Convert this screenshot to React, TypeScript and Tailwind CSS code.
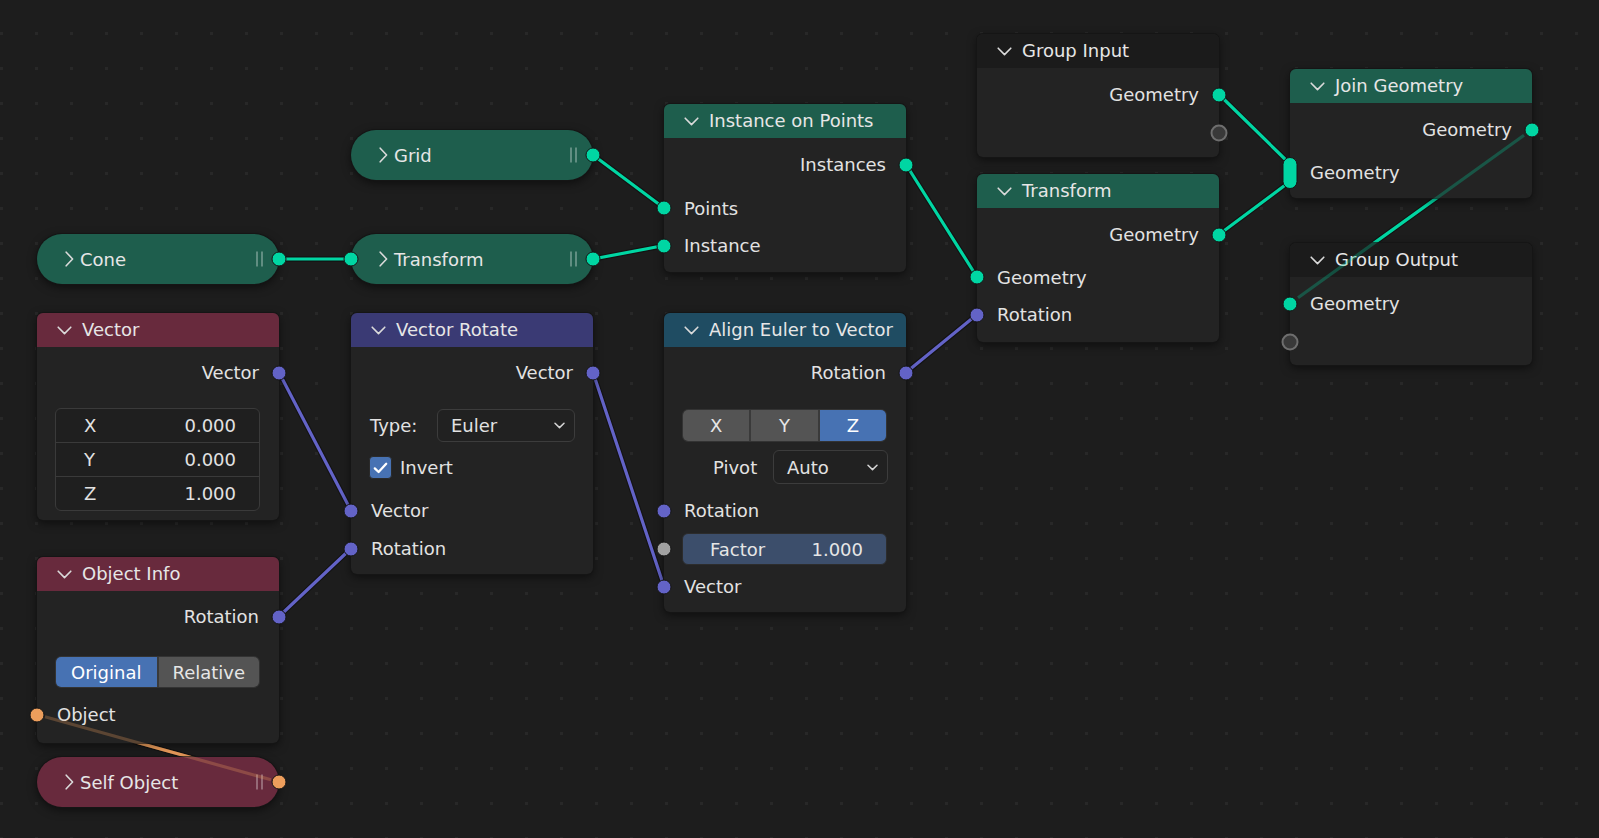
import React from 'react';

type SockKind = 'dot' | 'hollow' | 'multi';

function Socket({ side, color = '', kind = 'dot' }: { side: 'l' | 'r'; color?: string; kind?: SockKind }) {
  const pos = side === 'l' ? 'left-0 -translate-x-1/2' : 'right-0 translate-x-1/2';
  if (kind === 'hollow') {
    return (
      <div
        className={`absolute top-1/2 -translate-y-1/2 ${pos} w-[17px] h-[17px] rounded-full border-2 border-[#6e6e6e] bg-[#393939]`}
      />
    );
  }
  if (kind === 'multi') {
    return (
      <div
        className={`absolute top-1/2 -translate-y-1/2 ${pos} w-[15px] h-[32px] rounded-full border border-[#151515] ${color}`}
      />
    );
  }
  return (
    <div
      className={`absolute top-1/2 -translate-y-1/2 ${pos} w-[15px] h-[15px] rounded-full border border-[#151515] ${color}`}
    />
  );
}

function ChevronDown() {
  return (
    <svg width="15" height="9" viewBox="0 0 15 9" className="shrink-0">
      <path d="M1.2 1.2L7.5 7.6L13.8 1.2" fill="none" stroke="#dadada" strokeWidth="1.6" strokeLinecap="round" strokeLinejoin="round" />
    </svg>
  );
}

function ChevronRight() {
  return (
    <svg width="9" height="16" viewBox="0 0 9 16" className="shrink-0">
      <path d="M1.2 1.2L7.6 8L1.2 14.8" fill="none" stroke="#dadada" strokeWidth="1.6" strokeLinecap="round" strokeLinejoin="round" />
    </svg>
  );
}

function SmallChevron() {
  return (
    <svg width="11" height="7" viewBox="0 0 11 7" className="shrink-0">
      <path d="M1 1.2L5.5 5.6L10 1.2" fill="none" stroke="#d5d5d5" strokeWidth="1.5" strokeLinecap="round" strokeLinejoin="round" />
    </svg>
  );
}

function Pause() {
  return (
    <div className="flex gap-[3px]">
      <div className="w-[2px] h-[15px] bg-white/30" />
      <div className="w-[2px] h-[15px] bg-white/30" />
    </div>
  );
}

function Node({ pos, header, title, children }: { pos: string; header: string; title: string; children: React.ReactNode }) {
  return (
    <div className={`absolute ${pos} w-[242px] rounded-[6px] bg-[#232323] shadow-[0_0_0_1px_#151515,0_3px_10px_rgba(0,0,0,0.55)]`}>
      <div className={`h-[34px] rounded-t-[6px] ${header} flex items-center pl-[20px] gap-[10px] text-[18px] text-[#e6e6e6]`}>
        <ChevronDown />
        <span className="leading-none">{title}</span>
      </div>
      {children}
    </div>
  );
}

function Sp({ h }: { h: string }) {
  return <div className={h} />;
}

function OutRow({ h, label, color, kind }: { h: string; label: string; color?: string; kind?: SockKind }) {
  return (
    <div className={`relative flex items-center justify-end pr-[20px] ${h} text-[18px] text-[#e2e2e2]`}>
      <span>{label}</span>
      <Socket side="r" color={color} kind={kind} />
    </div>
  );
}

function InRow({ h, label, color, kind }: { h: string; label: string; color?: string; kind?: SockKind }) {
  return (
    <div className={`relative flex items-center pl-[20px] ${h} text-[18px] text-[#e2e2e2]`}>
      <span>{label}</span>
      <Socket side="l" color={color} kind={kind} />
    </div>
  );
}

function Pill({
  pos,
  color,
  title,
  inColor,
  outColor,
}: {
  pos: string;
  color: string;
  title: string;
  inColor?: string;
  outColor: string;
}) {
  return (
    <div
      className={`absolute ${pos} w-[242px] h-[50px] rounded-full ${color} flex items-center pl-[28px] text-[18px] text-[#e6e6e6] shadow-[0_0_0_1px_#151515,0_3px_10px_rgba(0,0,0,0.55)]`}
    >
      <ChevronRight />
      <span className="ml-[6px]">{title}</span>
      <div className="absolute right-[16px] top-1/2 -translate-y-1/2">
        <Pause />
      </div>
      {inColor ? <Socket side="l" color={inColor} /> : null}
      <Socket side="r" color={outColor} />
    </div>
  );
}

function Dropdown({ label, cls }: { label: string; cls: string }) {
  return (
    <div className={`${cls} h-full rounded-[6px] border border-[#3c3c3c] bg-[#212121] flex items-center justify-between pl-[13px] pr-[9px] text-[18px] text-[#e2e2e2]`}>
      <span>{label}</span>
      <SmallChevron />
    </div>
  );
}

const G = 'bg-[#00d6a3]';
const V = 'bg-[#6363c7]';
const O = 'bg-[#ed9e5c]';
const F = 'bg-[#a1a1a1]';

type L = [number, number, number, number, string];

const links: L[] = [
  [279, 259, 351, 259, '#00d6a3'],
  [593, 155, 664, 208, '#00d6a3'],
  [593, 259, 664, 245.5, '#00d6a3'],
  [906, 164.5, 977, 277, '#00d6a3'],
  [906, 372.5, 977, 314.5, '#6363c7'],
  [1219, 94.5, 1288, 162, '#00d6a3'],
  [1219, 234.5, 1288, 183, '#00d6a3'],
  [1532, 129.5, 1290, 303.5, '#00d6a3'],
  [279, 372.5, 351, 510.5, '#6363c7'],
  [279, 616.5, 351, 548.5, '#6363c7'],
  [593, 372.5, 664, 586.5, '#6363c7'],
  [279, 782, 37, 714.5, '#ed9e5c'],
];

const backLinks: L[] = [links[7], links[11]];

export default function App() {
  return (
    <div className="relative w-[1599px] h-[838px] overflow-hidden bg-[#1d1d1d] font-['DejaVu_Sans',sans-serif]">
      <svg className="absolute inset-0" width="1599" height="838">
        <defs>
          <pattern id="dots" width="35" height="35" patternUnits="userSpaceOnUse">
            <rect x="0" y="32" width="3" height="3" fill="#282828" />
          </pattern>
        </defs>
        <rect width="1599" height="838" fill="url(#dots)" />
        {links.map(([x1, y1, x2, y2, c], i) => (
          <g key={i}>
            <line x1={x1} y1={y1} x2={x2} y2={y2} stroke="#000" strokeOpacity="0.35" strokeWidth="5.5" strokeLinecap="round" />
            <line x1={x1} y1={y1} x2={x2} y2={y2} stroke={c} strokeWidth="3.2" strokeLinecap="round" />
          </g>
        ))}
      </svg>

      {/* Column 1 */}
      <Pill pos="left-[37px] top-[234px]" color="bg-[#1e5e4d]" title="Cone" outColor={G} />

      <Node pos="left-[37px] top-[313px]" header="bg-[#682a3d]" title="Vector">
        <Sp h="h-[6px]" />
        <OutRow h="h-[39px]" label="Vector" color={V} />
        <Sp h="h-[16px]" />
        <div className="ml-[18px] mr-[19px] h-[103px] rounded-[6px] border border-[#3a3a3a] bg-[#1f1f1f] flex flex-col text-[18px] text-[#e2e2e2]">
          {[
            ['X', '0.000'],
            ['Y', '0.000'],
            ['Z', '1.000'],
          ].map(([k, v], i) => (
            <div
              key={k}
              className={`flex-1 flex items-center justify-between pl-[28px] pr-[23px] ${i > 0 ? 'border-t border-[#3a3a3a]' : ''}`}
            >
              <span>{k}</span>
              <span>{v}</span>
            </div>
          ))}
        </div>
        <Sp h="h-[9px]" />
      </Node>

      <Node pos="left-[37px] top-[557px]" header="bg-[#682a3d]" title="Object Info">
        <Sp h="h-[6px]" />
        <OutRow h="h-[39px]" label="Rotation" color={V} />
        <Sp h="h-[20px]" />
        <div className="ml-[18px] mr-[19px] h-[32px] rounded-[6px] border border-[#333] flex overflow-hidden text-[18px] text-white">
          <div className="flex-1 bg-[#4772b3] flex items-center justify-center">Original</div>
          <div className="w-[2px] bg-[#3a3a3a]" />
          <div className="flex-1 bg-[#545454] flex items-center justify-center text-[#e6e6e6]">Relative</div>
        </div>
        <Sp h="h-[7px]" />
        <InRow h="h-[39px]" label="Object" color={O} />
        <Sp h="h-[9px]" />
      </Node>

      <Pill pos="left-[37px] top-[757px]" color="bg-[#682a3d]" title="Self Object" outColor={O} />

      {/* Column 2 */}
      <Pill pos="left-[351px] top-[130px]" color="bg-[#1e5e4d]" title="Grid" outColor={G} />
      <Pill pos="left-[351px] top-[234px]" color="bg-[#1e5e4d]" title="Transform" inColor={G} outColor={G} />

      <Node pos="left-[351px] top-[313px]" header="bg-[#3a3a74]" title="Vector Rotate">
        <Sp h="h-[6px]" />
        <OutRow h="h-[39px]" label="Vector" color={V} />
        <Sp h="h-[17px]" />
        <div className="h-[33px] flex items-center pl-[19px] pr-[18px] text-[18px] text-[#e2e2e2]">
          <span className="w-[67px]">Type:</span>
          <Dropdown label="Euler" cls="flex-1" />
        </div>
        <Sp h="h-[7px]" />
        <div className="h-[37px] flex items-center pl-[18px] text-[18px] text-[#e2e2e2]">
          <div className="w-[23px] h-[23px] rounded-[4px] bg-[#4772b3] border border-[#2a2a2a] flex items-center justify-center">
            <svg width="15" height="12" viewBox="0 0 15 12">
              <path d="M1.8 6.4L5.6 10L13.2 1.8" fill="none" stroke="#fff" strokeWidth="2.3" strokeLinecap="round" strokeLinejoin="round" />
            </svg>
          </div>
          <span className="ml-[8px]">Invert</span>
        </div>
        <Sp h="h-[5px]" />
        <InRow h="h-[39px]" label="Vector" color={V} />
        <InRow h="h-[37px]" label="Rotation" color={V} />
        <Sp h="h-[7px]" />
      </Node>

      {/* Column 3 */}
      <Node pos="left-[664px] top-[104px]" header="bg-[#1e5e4d]" title="Instance on Points">
        <Sp h="h-[7px]" />
        <OutRow h="h-[39px]" label="Instances" color={G} />
        <Sp h="h-[5px]" />
        <InRow h="h-[38px]" label="Points" color={G} />
        <InRow h="h-[37px]" label="Instance" color={G} />
        <Sp h="h-[8px]" />
      </Node>

      <Node pos="left-[664px] top-[313px]" header="bg-[#1f4c62]" title="Align Euler to Vector">
        <Sp h="h-[6px]" />
        <OutRow h="h-[39px]" label="Rotation" color={V} />
        <Sp h="h-[17px]" />
        <div className="ml-[18px] mr-[19px] h-[33px] rounded-[6px] border border-[#333] flex overflow-hidden text-[18px] text-white">
          <div className="flex-1 bg-[#545454] flex items-center justify-center text-[#e6e6e6]">X</div>
          <div className="w-[2px] bg-[#3a3a3a]" />
          <div className="flex-1 bg-[#545454] flex items-center justify-center text-[#e6e6e6]">Y</div>
          <div className="w-[2px] bg-[#3a3a3a]" />
          <div className="flex-1 bg-[#4772b3] flex items-center justify-center">Z</div>
        </div>
        <Sp h="h-[8px]" />
        <div className="h-[34px] flex items-center pl-[49px] pr-[18px] text-[18px] text-[#e2e2e2]">
          <span className="w-[60px]">Pivot</span>
          <Dropdown label="Auto" cls="flex-1" />
        </div>
        <Sp h="h-[7px]" />
        <InRow h="h-[39px]" label="Rotation" color={V} />
        <div className="relative h-[38px] flex items-center pl-[18px] pr-[19px]">
          <div className="flex-1 h-[32px] rounded-[6px] border border-[#2c2c2c] bg-[#3c4e6b] flex items-center justify-between pl-[27px] pr-[23px] text-[18px] text-[#e6e6e6]">
            <span>Factor</span>
            <span>1.000</span>
          </div>
          <Socket side="l" color={F} />
        </div>
        <InRow h="h-[37px]" label="Vector" color={V} />
        <Sp h="h-[7px]" />
      </Node>

      {/* Column 4 */}
      <Node pos="left-[977px] top-[34px]" header="bg-[#1b1b1b]" title="Group Input">
        <Sp h="h-[7px]" />
        <OutRow h="h-[39px]" label="Geometry" color={G} />
        <div className="relative h-[37px]">
          <Socket side="r" kind="hollow" />
        </div>
        <Sp h="h-[6px]" />
      </Node>

      <Node pos="left-[977px] top-[174px]" header="bg-[#1e5e4d]" title="Transform">
        <Sp h="h-[7px]" />
        <OutRow h="h-[39px]" label="Geometry" color={G} />
        <Sp h="h-[4px]" />
        <InRow h="h-[38px]" label="Geometry" color={G} />
        <InRow h="h-[37px]" label="Rotation" color={V} />
        <Sp h="h-[9px]" />
      </Node>

      {/* Column 5 */}
      <Node pos="left-[1290px] top-[69px]" header="bg-[#1e5e4d]" title="Join Geometry">
        <Sp h="h-[7px]" />
        <OutRow h="h-[39px]" label="Geometry" color={G} />
        <Sp h="h-[4px]" />
        <InRow h="h-[39px]" label="Geometry" color={G} kind="multi" />
        <Sp h="h-[6px]" />
      </Node>

      <Node pos="left-[1290px] top-[243px]" header="bg-[#1b1b1b]" title="Group Output">
        <Sp h="h-[7px]" />
        <InRow h="h-[39px]" label="Geometry" color={G} />
        <div className="relative h-[37px]">
          <Socket side="l" kind="hollow" />
        </div>
        <Sp h="h-[5px]" />
      </Node>

      {/* backward links seen faintly through nodes */}
      <svg className="absolute inset-0 pointer-events-none" width="1599" height="838">
        {backLinks.map(([x1, y1, x2, y2, c], i) => (
          <line key={i} x1={x1 + (x2 > x1 ? 8 : -8)} y1={y1 + (y2 - y1) * (8 / Math.abs(x2 - x1))} x2={x2 + (x2 > x1 ? -8 : 8)} y2={y2 - (y2 - y1) * (8 / Math.abs(x2 - x1))} stroke={c} strokeOpacity="0.28" strokeWidth="3.2" />
        ))}
      </svg>
    </div>
  );
}
